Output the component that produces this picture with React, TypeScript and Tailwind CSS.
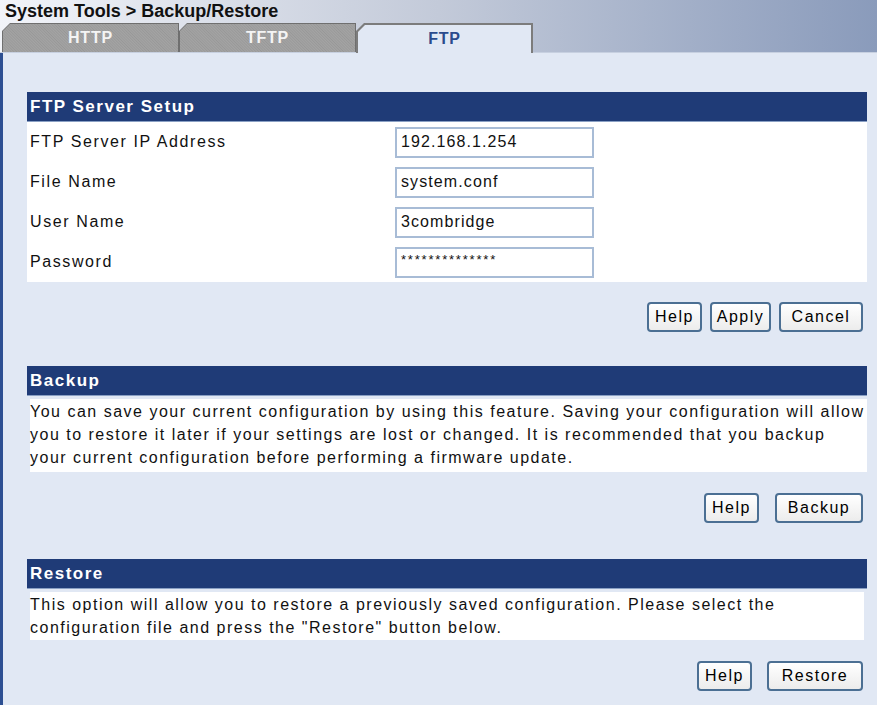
import React from 'react';

const font = { fontFamily: '"Liberation Sans", Arial, sans-serif' };

function Tab({ label, active = false }: { label: string; active?: boolean }) {
  if (active) {
    return (
      <div className="relative w-[177px] h-[30px] -mb-px">
        <div className="absolute inset-0 bg-[#7c7c7c] [clip-path:polygon(8px_0,100%_0,100%_100%,0_100%,0_8px)]" />
        <div className="absolute left-[2px] top-[2px] right-[2px] bottom-0 bg-[#e1e8f4] [clip-path:polygon(7px_0,100%_0,100%_100%,0_100%,0_7px)] flex items-center justify-center">
          <span className="text-[16px] font-bold tracking-[0.8px] text-[#2a4b8d]">{label}</span>
        </div>
      </div>
    );
  }
  return (
    <div className="relative w-[177px] h-[29px]">
      <div className="absolute inset-0 bg-[#6f6f6f] [clip-path:polygon(8px_0,100%_0,100%_100%,0_100%,0_8px)]" />
      <div className="absolute left-[1px] top-[1px] right-[1px] bottom-0 bg-[repeating-linear-gradient(45deg,#9c9c9c_0px,#a4a4a4_1px,#979797_2px)] [clip-path:polygon(7px_0,100%_0,100%_100%,0_100%,0_7px)] flex items-center justify-center">
        <span className="text-[16px] font-bold tracking-[0.8px] text-[#f4f4f4]">{label}</span>
      </div>
    </div>
  );
}

function Btn({ children, w }: { children: React.ReactNode; w: string }) {
  return (
    <button
      className={`${w} h-[30px] rounded-[4px] border-2 border-[#4b6f93] bg-gradient-to-b from-white to-[#ececec] text-[16px] tracking-[1.5px] text-black`}
    >
      {children}
    </button>
  );
}

function SectionHead({ title }: { title: string }) {
  return (
    <div className="h-[30px] bg-[#1f3b77] border-b border-[#8aa0c4] flex items-center pl-[3px]">
      <span className="text-white font-bold text-[17px] tracking-[1.5px]">{title}</span>
    </div>
  );
}

const fields = [
  { label: 'FTP Server IP Address', value: '192.168.1.254', pw: false },
  { label: 'File Name', value: 'system.conf', pw: false },
  { label: 'User Name', value: '3combridge', pw: false },
  { label: 'Password', value: '**************', pw: true },
];

export default function App() {
  return (
    <div className="w-[877px] h-[705px] bg-[#e1e8f4] overflow-hidden flex flex-col" style={font}>
      <div className="h-[53px] bg-gradient-to-r from-[#f2f4f9] via-[#c3cad9] to-[#8a9bbb] border-b border-[#c7d0e0] flex flex-col">
        <div className="h-[23px] pl-[5px] text-[18px] leading-[22px] font-bold text-[#111]">
          System Tools &gt; Backup/Restore
        </div>
        <div className="flex items-end pl-[2px] h-[30px]">
          <Tab label="HTTP" />
          <Tab label="TFTP" />
          <Tab label="FTP" active />
        </div>
      </div>

      <div className="flex-1 border-l-[3px] border-[#2d4f92] pl-[24px] pr-[10px] pt-[39px]">
        <SectionHead title="FTP Server Setup" />
        <div className="bg-white">
          {fields.map((f) => (
            <div key={f.label} className="h-[40px] flex items-center">
              <div className="w-[368px] pl-[3px] text-[16px] tracking-[1.6px] text-[#111]">{f.label}</div>
              <div className="w-[199px] h-[31px] border-2 border-[#a8bcd6] flex items-center px-[4px] text-[16px] tracking-[1.1px] text-[#111]">
                {f.pw ? <span className="text-[13px] leading-none -mt-[6px] tracking-[1.8px]">{f.value}</span> : f.value}
              </div>
            </div>
          ))}
        </div>
        <div className="flex justify-end gap-[8px] pt-[20px] pr-[4px]">
          <Btn w="w-[55px]">Help</Btn>
          <Btn w="w-[61px]">Apply</Btn>
          <Btn w="w-[84px]">Cancel</Btn>
        </div>

        <div className="mt-[34px]">
          <SectionHead title="Backup" />
          <p className="bg-white mt-[3px] ml-[3px] pt-[1px] pb-[3px] text-[16px] leading-[23px] tracking-[1.5px] text-[#111]">
            You can save your current configuration by using this feature. Saving your configuration will allow
            you to restore it later if your settings are lost or changed. It is recommended that you backup
            your current configuration before performing a firmware update.
          </p>
          <div className="flex justify-end gap-[16px] pt-[21px] pr-[4px]">
            <Btn w="w-[55px]">Help</Btn>
            <Btn w="w-[88px]">Backup</Btn>
          </div>
        </div>

        <div className="mt-[36px]">
          <SectionHead title="Restore" />
          <p className="bg-white mt-[3px] ml-[3px] mr-[3px] pt-[1px] pb-[1px] text-[16px] leading-[23px] tracking-[1.5px] text-[#111]">
            This option will allow you to restore a previously saved configuration. Please select the
            <br />
            configuration file and press the "Restore" button below.
          </p>
          <div className="flex justify-end gap-[15px] pt-[21px] pr-[4px]">
            <Btn w="w-[55px]">Help</Btn>
            <Btn w="w-[96px]">Restore</Btn>
          </div>
        </div>
      </div>
    </div>
  );
}
